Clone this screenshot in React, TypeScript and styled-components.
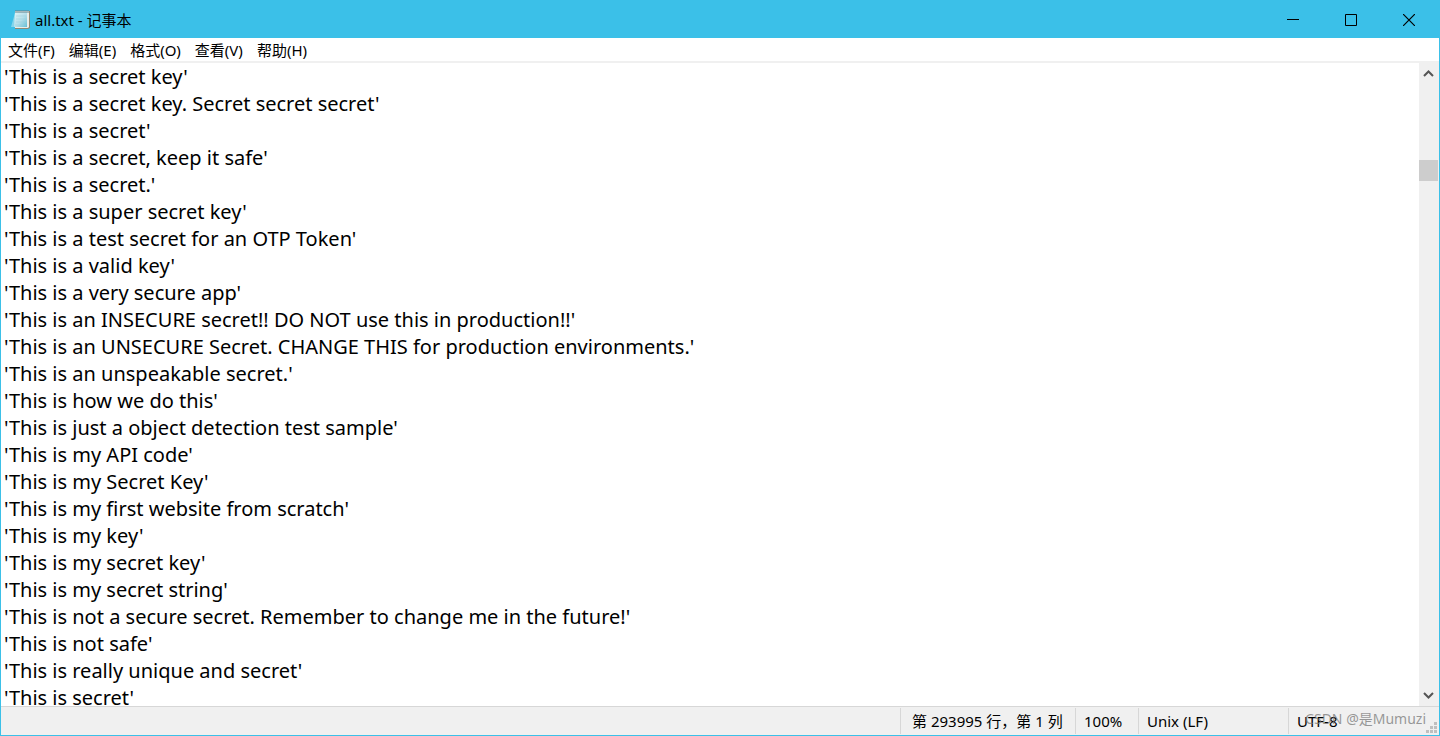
import React from "react";
import styled, { createGlobalStyle } from "styled-components";

const ACCENT = "#3bc0e8";
const UI_FONT = `"Noto Sans", "Noto Sans CJK SC", sans-serif`;

const GlobalStyle = createGlobalStyle`
  *, *::before, *::after { box-sizing: border-box; }
  body { margin: 0; background: #fff; }
  button { margin: 0; padding: 0; border: 0; background: transparent; font: inherit; color: inherit; }
`;

const Window = styled.div`
  position: relative;
  display: flex;
  flex-direction: column;
  height: 100vh;
  border: 1px solid ${ACCENT};
  background: #fff;
  color: #000;
  font-family: ${UI_FONT};
  font-size: 15px;
  line-height: 20px;
`;

const TitleBar = styled.header`
  display: flex;
  align-items: center;
  flex: none;
  height: 37px;
  padding: 0 1px 0 10px;
  background: ${ACCENT};
`;

const Title = styled.h1`
  flex: 1;
  margin: 0 0 0 4px;
  font-size: 15px;
  font-weight: 400;
  line-height: 20px;
`;

const WindowButton = styled.button`
  display: flex;
  align-items: center;
  justify-content: center;
  width: 58px;
  height: 35px;
`;

const MenuBar = styled.nav`
  display: flex;
  flex: none;
  align-items: center;
  height: 25px;
  border-bottom: 2px solid #f0f0f0;
`;

const MenuButton = styled.button`
  height: 22px;
  padding: 0 7px;
  white-space: nowrap;
`;

const EditorRow = styled.main`
  display: flex;
  flex: 1;
  min-height: 0;
`;

const Editor = styled.textarea`
  flex: 1;
  min-width: 0;
  margin: 0;
  padding: 0 3px;
  border: 0;
  outline: 0;
  resize: none;
  overflow: hidden;
  white-space: pre;
  background: #fff;
  color: #000;
  font-family: ${UI_FONT};
  font-size: 20px;
  line-height: 27px;
`;

const ScrollTrack = styled.div`
  display: flex;
  flex: none;
  flex-direction: column;
  width: 20px;
  background: #f0f0f0;
`;

const ScrollButton = styled.button`
  display: flex;
  align-items: center;
  justify-content: center;
  flex: none;
  width: 19px;
  height: 21px;
`;

const ScrollSpace = styled.div<{ $grow: number }>`
  flex: ${(p) => p.$grow} 0 0;
`;

const ScrollThumb = styled.div`
  flex: none;
  width: 19px;
  height: 21px;
  background: #cdcdcd;
`;

const StatusBar = styled.footer`
  display: flex;
  flex: none;
  justify-content: flex-end;
  height: 29px;
  padding: 1px 0;
  border-top: 1px solid #d7d7d7;
  background: #f0f0f0;
`;

const StatusCell = styled.div<{ $width: number; $indent: number }>`
  display: flex;
  align-items: center;
  flex: none;
  width: ${(p) => p.$width}px;
  padding-left: ${(p) => p.$indent}px;
  border-left: 1px solid #d7d7d7;
  white-space: nowrap;
`;

const SizeGrip = styled.svg`
  position: absolute;
  right: 2px;
  bottom: 2px;
`;

const Watermark = styled.span`
  position: absolute;
  right: 13px;
  bottom: 6px;
  color: rgba(120, 120, 120, 0.75);
  font-size: 14px;
  line-height: 20px;
  pointer-events: none;
`;

const NotepadIcon = () => (
  <svg width="20" height="21" viewBox="0 0 20 21" aria-hidden="true">
    <defs>
      <linearGradient id="page" x1="0" y1="0" x2="1" y2="1">
        <stop offset="0" stopColor="#e2f4f7" />
        <stop offset="0.55" stopColor="#b3dfea" />
        <stop offset="1" stopColor="#63bfd6" />
      </linearGradient>
    </defs>
    <path d="M4 4 0 18h5z" fill="#83d6ec" />
    <path d="M4 2h15v17l-2 1H4z" fill="#8d8a74" />
    <path d="M4 2h14v16l-1 1H4z" fill="#e9eeea" />
    <path d="M4 3h12v15H3z" fill="url(#page)" />
    <path d="M5 7h10M5 10h10M5 13h10M4 16h11" stroke="#9bcfdb" strokeWidth="1" opacity="0.5" />
    <path d="M5 1v3M7 1v3M9 1v3M11 1v3M13 1v3M15 1v3M17 1v3" stroke="#62818b" strokeWidth="1" />
  </svg>
);

const Chevron = ({ down = false }: { down?: boolean }) => (
  <svg width="11" height="9" viewBox="0 0 11 9" aria-hidden="true">
    <path d={down ? "M1 2l4.5 4.5L10 2" : "M1 7l4.5-4.5L10 7"} fill="none" stroke="#555" strokeWidth="2" />
  </svg>
);

const MENUS = ["文件(F)", "编辑(E)", "格式(O)", "查看(V)", "帮助(H)"];

const STATUS = [
  { text: "第 293995 行，第 1 列", width: 175, indent: 11 },
  { text: "100%", width: 63, indent: 8 },
  { text: "Unix (LF)", width: 150, indent: 8 },
  { text: "UTF-8", width: 151, indent: 8 },
];

const LINES = [
  "'This is a secret key'",
  "'This is a secret key. Secret secret secret'",
  "'This is a secret'",
  "'This is a secret, keep it safe'",
  "'This is a secret.'",
  "'This is a super secret key'",
  "'This is a test secret for an OTP Token'",
  "'This is a valid key'",
  "'This is a very secure app'",
  "'This is an INSECURE secret!! DO NOT use this in production!!'",
  "'This is an UNSECURE Secret. CHANGE THIS for production environments.'",
  "'This is an unspeakable secret.'",
  "'This is how we do this'",
  "'This is just a object detection test sample'",
  "'This is my API code'",
  "'This is my Secret Key'",
  "'This is my first website from scratch'",
  "'This is my key'",
  "'This is my secret key'",
  "'This is my secret string'",
  "'This is not a secure secret. Remember to change me in the future!'",
  "'This is not safe'",
  "'This is really unique and secret'",
  "'This is secret'",
];

export default function App() {
  return (
    <>
      <GlobalStyle />
      <Window>
        <TitleBar>
          <NotepadIcon />
          <Title>all.txt - 记事本</Title>
          <WindowButton aria-label="最小化">
            <svg width="12" height="12" viewBox="0 0 12 12">
              <path d="M0 5.5h12" stroke="#000" />
            </svg>
          </WindowButton>
          <WindowButton aria-label="最大化">
            <svg width="12" height="12" viewBox="0 0 12 12">
              <path d="M.5.5h11v11H.5z" fill="none" stroke="#000" />
            </svg>
          </WindowButton>
          <WindowButton aria-label="关闭">
            <svg width="12" height="12" viewBox="0 0 12 12">
              <path d="M0 0l12 12M12 0L0 12" stroke="#000" strokeWidth="1.2" />
            </svg>
          </WindowButton>
        </TitleBar>
        <MenuBar>
          {MENUS.map((label) => (
            <MenuButton key={label}>{label}</MenuButton>
          ))}
        </MenuBar>
        <EditorRow>
          <Editor aria-label="文本编辑器" spellCheck={false} wrap="off" defaultValue={LINES.join("\n")} />
          <ScrollTrack>
            <ScrollButton aria-label="向上滚动">
              <Chevron />
            </ScrollButton>
            <ScrollSpace $grow={76} />
            <ScrollThumb />
            <ScrollSpace $grow={504} />
            <ScrollButton aria-label="向下滚动">
              <Chevron down />
            </ScrollButton>
          </ScrollTrack>
        </EditorRow>
        <StatusBar>
          {STATUS.map((cell) => (
            <StatusCell key={cell.text} $width={cell.width} $indent={cell.indent}>
              {cell.text}
            </StatusCell>
          ))}
        </StatusBar>
        <SizeGrip width="11" height="11" viewBox="0 0 11 11" aria-hidden="true">
          <path
            d="M8 0h3v3H8zM4 4h3v3H4zM8 4h3v3H8zM0 8h3v3H0zM4 8h3v3H4zM8 8h3v3H8z"
            fill="#bfbfbf"
          />
        </SizeGrip>
        <Watermark>CSDN @是Mumuzi</Watermark>
      </Window>
    </>
  );
}
